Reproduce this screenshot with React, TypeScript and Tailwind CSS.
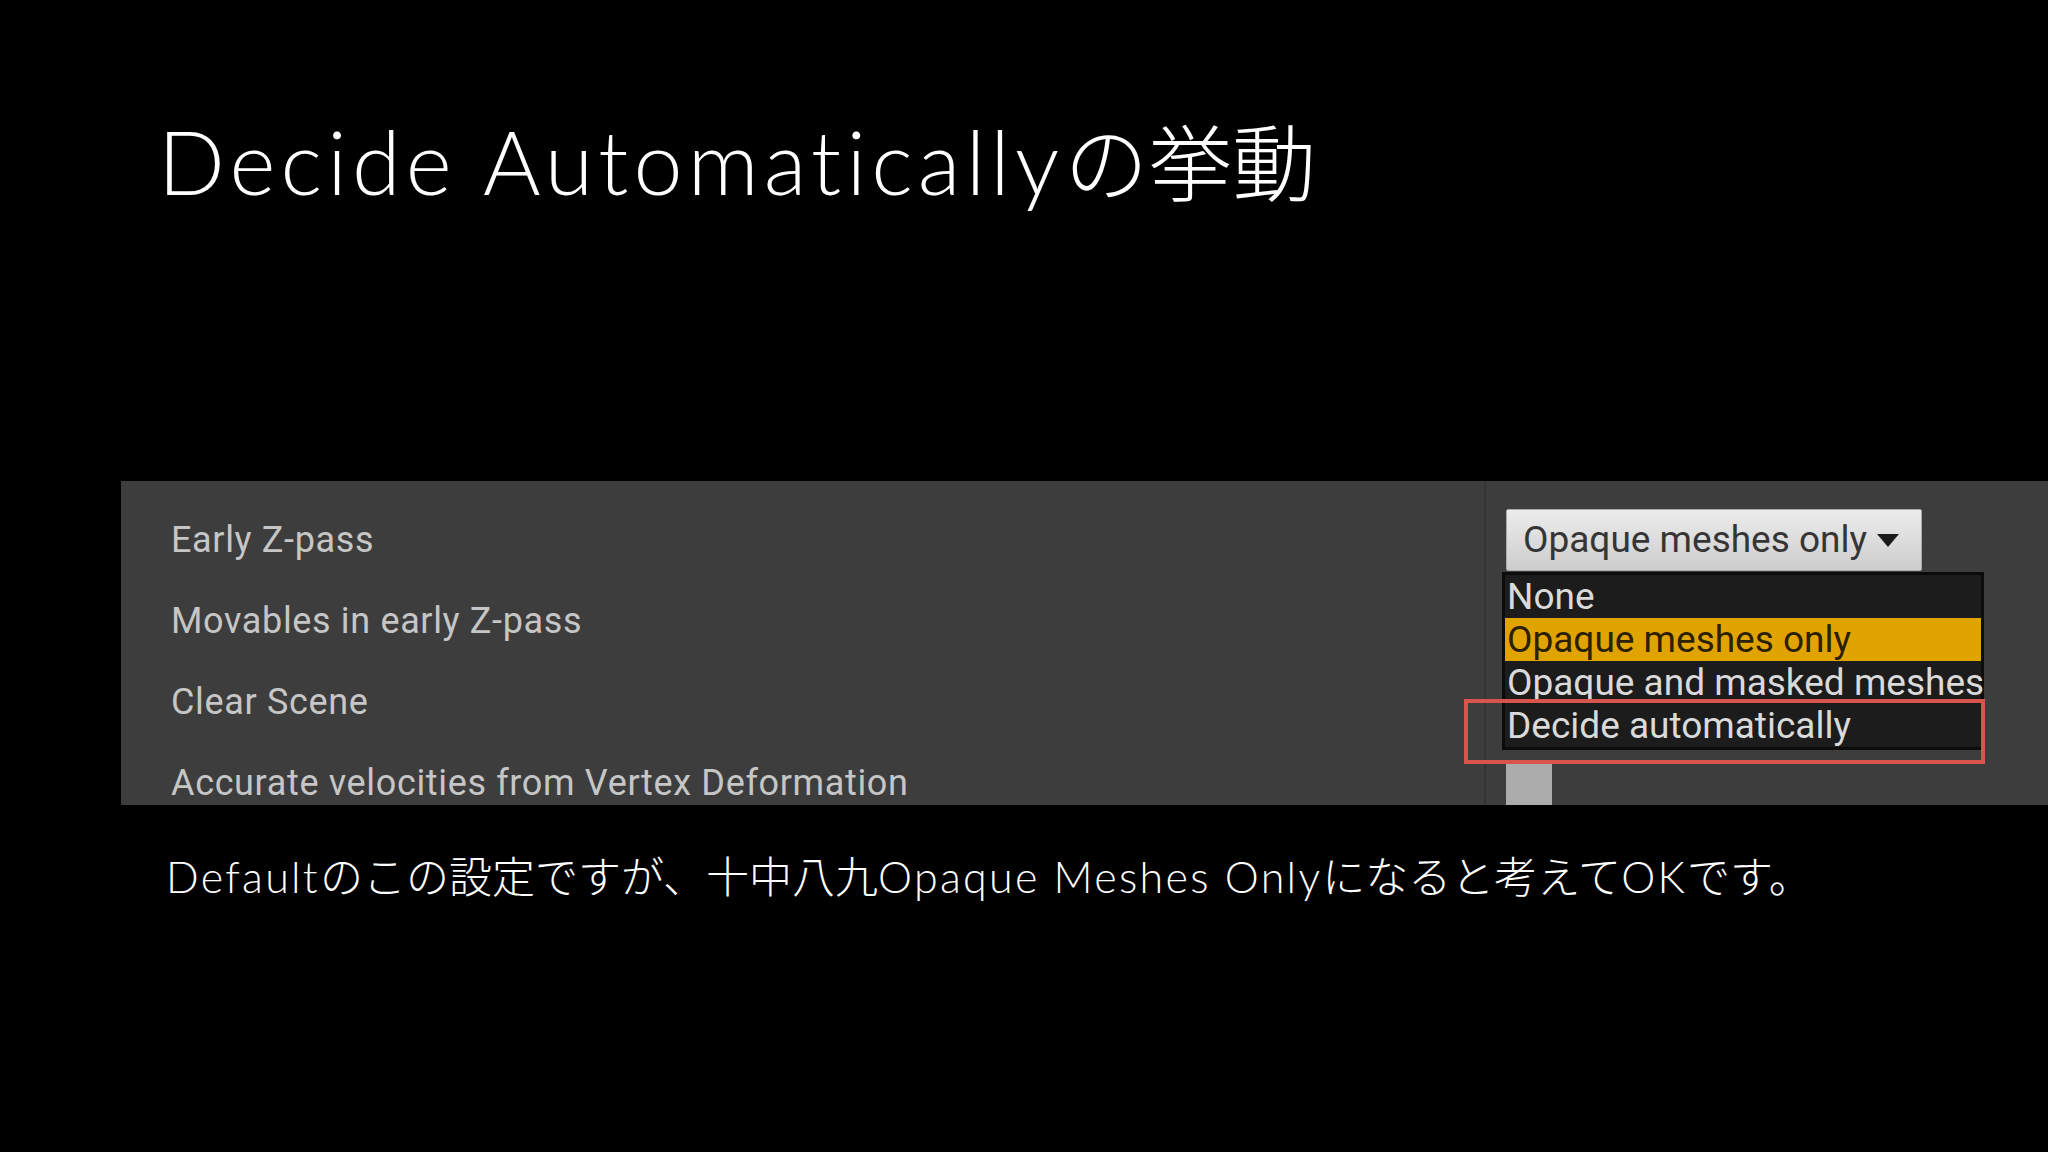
import React from 'react';

const labels = [
  'Early Z-pass',
  'Movables in early Z-pass',
  'Clear Scene',
  'Accurate velocities from Vertex Deformation',
];

const options = [
  'None',
  'Opaque meshes only',
  'Opaque and masked meshes',
  'Decide automatically',
];

const slideFont = { fontFamily: '"Lato", "Noto Sans CJK JP", sans-serif' };
const ueFont = { fontFamily: 'Roboto, "Liberation Sans", sans-serif' };

function DetailsPanel() {
  return (
    <div className="ml-[121px] h-[324px] bg-[#3d3d3d] flex overflow-hidden" style={ueFont}>
      {/* property names */}
      <div className="w-[1363px] pt-[18px] pl-[50px] flex flex-col">
        {labels.map((l) => (
          <div key={l} className="h-[81px] shrink-0 flex items-center text-[36px] text-[#c6c6c6] tracking-[0.65px] whitespace-nowrap">
            {l}
          </div>
        ))}
      </div>
      <div className="w-[2px] bg-[#343434]" />
      {/* values */}
      <div className="relative flex-1 pt-[18px] pl-[20px] flex flex-col">
        <div className="h-[81px] shrink-0 flex items-center">
          <div className="h-[62px] w-[416px] flex items-center gap-[10px] pl-[16px] bg-gradient-to-b from-[#ececec] to-[#cdcdcd] border border-[#a9a9a9] rounded-[2px] text-[37px] text-[#353535] whitespace-nowrap">
            <span>Opaque meshes only</span>
            <svg width="22" height="13" viewBox="0 0 22 13" className="mt-[2px]">
              <path d="M0 0 H22 L11 13 Z" fill="#1a1a1a" />
            </svg>
          </div>
        </div>
        <div className="h-[81px] shrink-0" />
        <div className="h-[81px] shrink-0" />
        <div className="h-[81px] shrink-0 flex items-center">
          <div className="w-[46px] h-[46px] bg-[#acacac]" />
        </div>

        {/* open dropdown menu */}
        <div className="absolute left-[16px] top-[91px] w-[482px] bg-[#1c1c1c] border-[3px] border-[#0b0b0b] flex flex-col">
          {options.map((o, i) => (
            <div
              key={o}
              className={
                i === 1
                  ? 'h-[43px] flex items-center pl-[2px] bg-[#e1a300] text-[37px] text-[#2b2100] whitespace-nowrap'
                  : 'h-[43px] flex items-center pl-[2px] text-[37px] text-[#dadada] whitespace-nowrap'
              }
            >
              {o}
            </div>
          ))}
        </div>

        {/* annotation */}
        <div className="absolute left-[-22px] top-[218px] w-[521px] h-[65px] border-[4px] border-[#d9544a]" />
      </div>
    </div>
  );
}

export default function App() {
  return (
    <div className="w-[2048px] h-[1152px] bg-black overflow-hidden">
      <div className="h-[481px] pl-[158px] pt-[117px]" style={slideFont}>
        <h1 className="text-[88px] leading-none font-light text-white whitespace-nowrap">
          <span className="tracking-[5.2px]">Decide Automatically</span>
          <span className="text-[84px]">の挙動</span>
        </h1>
      </div>
      <DetailsPanel />
      <div className="pl-[166px] pt-[50px]" style={slideFont}>
        <p className="text-[43px] leading-none font-light text-white whitespace-nowrap">
          <span className="tracking-[2.3px]">Default</span>
          のこの設定ですが、十中八九
          <span className="tracking-[2.3px]">Opaque Meshes Only</span>
          になると考えて
          <span className="tracking-[2.3px]">OK</span>
          です。
        </p>
      </div>
    </div>
  );
}
